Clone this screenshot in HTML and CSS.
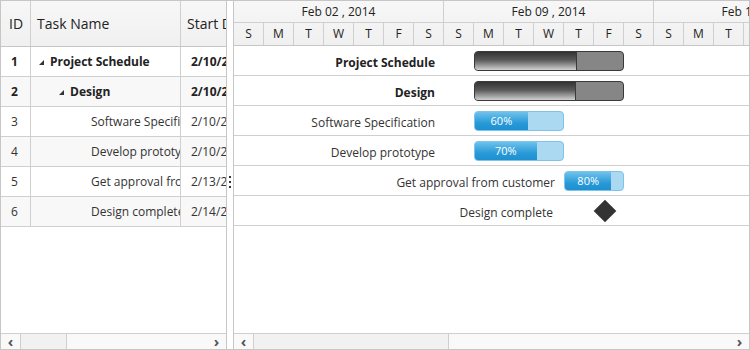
FILE: index.html
```html
<!DOCTYPE html>
<html lang="en">
<head>
    <meta charset="UTF-8">
    <title>Gantt</title>
    <link rel="stylesheet" href="styles.css">
</head>
<body>
    <div class="gantt">
        <!-- left grid -->
        <div class="grid-pane">
            <div class="grid-head">
                <div class="cell c-id">ID</div>
                <div class="cell c-name">Task Name</div>
                <div class="cell c-date">Start Date</div>
            </div>
            <div class="grid-body">
                <div class="grid-row bold">
                    <div class="cell c-id">1</div>
                    <div class="cell c-name lvl0"><span class="expander"></span>Project Schedule</div>
                    <div class="cell c-date">2/10/2014</div>
                </div>
                <div class="grid-row bold alt">
                    <div class="cell c-id">2</div>
                    <div class="cell c-name lvl1"><span class="expander"></span>Design</div>
                    <div class="cell c-date">2/10/2014</div>
                </div>
                <div class="grid-row">
                    <div class="cell c-id">3</div>
                    <div class="cell c-name lvl2">Software Specification</div>
                    <div class="cell c-date">2/10/2014</div>
                </div>
                <div class="grid-row alt">
                    <div class="cell c-id">4</div>
                    <div class="cell c-name lvl2">Develop prototype</div>
                    <div class="cell c-date">2/10/2014</div>
                </div>
                <div class="grid-row">
                    <div class="cell c-id">5</div>
                    <div class="cell c-name lvl2">Get approval from customer</div>
                    <div class="cell c-date">2/13/2014</div>
                </div>
                <div class="grid-row alt">
                    <div class="cell c-id">6</div>
                    <div class="cell c-name lvl2">Design complete</div>
                    <div class="cell c-date">2/14/2014</div>
                </div>
            </div>
            <div class="scrollbar">
                <div class="sb-btn">&#8249;</div>
                <div class="sb-thumb" style="width: 45px"></div>
                <div class="sb-track"></div>
                <div class="sb-btn">&#8250;</div>
            </div>
        </div>

        <div class="splitter">
            <div class="grip"><i></i><i></i><i></i></div>
        </div>

        <!-- chart -->
        <div class="chart-pane">
            <div class="chart-head">
                <div class="week-row">
                    <div class="week">Feb 02 , 2014</div>
                    <div class="week">Feb 09 , 2014</div>
                    <div class="week">Feb 16 , 2014</div>
                </div>
                <div class="day-row">
                    <div class="day">S</div><div class="day">M</div><div class="day">T</div><div class="day">W</div><div class="day">T</div><div class="day">F</div><div class="day">S</div>
                    <div class="day">S</div><div class="day">M</div><div class="day">T</div><div class="day">W</div><div class="day">T</div><div class="day">F</div><div class="day">S</div>
                    <div class="day">S</div><div class="day">M</div><div class="day">T</div><div class="day">W</div><div class="day">T</div><div class="day">F</div><div class="day">S</div>
                </div>
            </div>
            <div class="chart-body">
                <div class="chart-row">
                    <div class="task summary" style="left: 240px; width: 150px">
                        <span class="label bold parent">Project Schedule</span>
                        <div class="progress" style="width: 69%"></div>
                    </div>
                </div>
                <div class="chart-row">
                    <div class="task summary" style="left: 240px; width: 150px">
                        <span class="label bold parent">Design</span>
                        <div class="progress" style="width: 68%"></div>
                    </div>
                </div>
                <div class="chart-row">
                    <div class="task child" style="left: 240px; width: 90px">
                        <span class="label parent">Software Specification</span>
                        <div class="progress" style="width: 60%">60%</div>
                    </div>
                </div>
                <div class="chart-row">
                    <div class="task child" style="left: 240px; width: 90px">
                        <span class="label parent">Develop prototype</span>
                        <div class="progress" style="width: 70%">70%</div>
                    </div>
                </div>
                <div class="chart-row">
                    <div class="task child" style="left: 330px; width: 60px">
                        <span class="label">Get approval from customer</span>
                        <div class="progress" style="width: 80%">80%</div>
                    </div>
                </div>
                <div class="chart-row">
                    <div class="milestone" style="left: 371px">
                        <span class="label">Design complete</span>
                        <div class="diamond"></div>
                    </div>
                </div>
            </div>
            <div class="scrollbar">
                <div class="sb-btn">&#8249;</div>
                <div class="sb-thumb" style="width: 194px"></div>
                <div class="sb-track"></div>
                <div class="sb-btn">&#8250;</div>
            </div>
        </div>
    </div>
</body>
</html>
```

FILE: styles.css
```css
body {
    margin: 0;
    font-family: "Open Sans", "Noto Sans", sans-serif;
    color: #333;
    background: #fff;
}

.gantt {
    display: flex;
    width: 750px;
    height: 350px;
    box-sizing: border-box;
    border: 1px solid #c6c6c6;
    overflow: hidden;
}

/* ---------- left grid ---------- */
.grid-pane {
    width: 225px;
    flex: none;
    display: flex;
    flex-direction: column;
    border-right: 1px solid #c6c6c6;
    overflow: hidden;
}

.grid-head {
    display: flex;
    height: 45px;
    flex: none;
    background: linear-gradient(#f7f7f7, #f0f0f0);
    border-bottom: 1px solid #c6c6c6;
    font-size: 14px;
    color: #222;
}

.grid-body {
    flex: 1;
}

.grid-row {
    display: flex;
    height: 29px;
    border-bottom: 1px solid #cfcfcf;
    font-size: 12px;
}

.grid-row.alt {
    background: #f8f8f8;
}

.grid-row.bold {
    font-weight: bold;
    color: #222;
}

.cell {
    display: flex;
    align-items: center;
    white-space: nowrap;
    overflow: hidden;
    box-sizing: border-box;
    border-right: 1px solid #cfcfcf;
}

.c-id {
    width: 30px;
    padding-left: 8px;
    flex: none;
}

.grid-row .c-id {
    padding-left: 10px;
}

.c-name {
    width: 150px;
    padding-left: 6px;
    flex: none;
}

.c-date {
    flex: 1;
    padding-left: 6px;
    border-right: none;
}

.grid-row .c-date {
    padding-left: 10px;
}

.lvl0 { padding-left: 8px; }
.lvl1 { padding-left: 28px; }
.lvl2 { padding-left: 60px; }

.expander {
    width: 0;
    height: 0;
    border-left: 5px solid transparent;
    border-bottom: 5px solid #333;
    margin-right: 6px;
    margin-top: 1px;
}

/* ---------- splitter ---------- */
.splitter {
    width: 6px;
    flex: none;
    background: #fff;
    border-right: 1px solid #c6c6c6;
    position: relative;
}

.grip {
    position: absolute;
    top: 175px;
    left: 2px;
    display: flex;
    flex-direction: column;
    gap: 3px;
}

.grip i {
    width: 2px;
    height: 2px;
    background: #333;
}

/* ---------- chart ---------- */
.chart-pane {
    flex: 1;
    display: flex;
    flex-direction: column;
    overflow: hidden;
}

.chart-head {
    flex: none;
    background: linear-gradient(#f7f7f7, #f0f0f0);
    border-bottom: 1px solid #c6c6c6;
    color: #222;
    font-size: 12px;
}

.week-row,
.day-row {
    display: flex;
}

.week {
    width: 210px;
    flex: none;
    box-sizing: border-box;
    height: 22px;
    line-height: 22px;
    text-align: center;
    border-right: 1px solid #cfcfcf;
    border-bottom: 1px solid #cfcfcf;
}

.day {
    width: 30px;
    flex: none;
    box-sizing: border-box;
    height: 22px;
    line-height: 22px;
    text-align: center;
    border-right: 1px solid #cfcfcf;
}

.chart-body {
    flex: 1;
}

.chart-row {
    position: relative;
    height: 29px;
    border-bottom: 1px solid #cfcfcf;
    font-size: 12px;
}

.task {
    position: absolute;
    top: 5px;
    height: 20px;
    box-sizing: border-box;
    border-radius: 4px;
}

.label {
    position: absolute;
    right: 100%;
    margin-right: 10px;
    top: 2px;
    white-space: nowrap;
    color: #333;
}

.label.parent {
    margin-right: 40px;
}

.label.bold {
    font-weight: bold;
    color: #222;
}

.summary {
    background: #868686;
    border: 1px solid #3a3a3a;
}

.summary .progress {
    height: 100%;
    background: linear-gradient(#333, #5a5a5a 45%, #d0d0d0);
    border-right: 1px solid #3a3a3a;
    border-radius: 3px 0 0 3px;
    box-sizing: border-box;
}

.child {
    background: #aad9f1;
    border: 1px solid #7ec4ea;
}

.child .progress {
    height: 100%;
    background: linear-gradient(#6ec2ec, #2a9ad7 60%, #1c90d1);
    border-radius: 3px 0 0 3px;
    color: #fff;
    font-size: 11px;
    line-height: 18px;
    text-align: center;
}

.milestone {
    position: absolute;
    top: 5px;
    height: 20px;
}

.milestone .label {
    margin-right: 52px;
    top: 3px;
}

.diamond {
    position: absolute;
    top: 2px;
    left: -8px;
    width: 16px;
    height: 16px;
    background: #333;
    transform: rotate(45deg);
}

/* ---------- scrollbar ---------- */
.scrollbar {
    flex: none;
    display: flex;
    height: 15px;
    border-top: 1px solid #cfcfcf;
    background: #f9f9f9;
    color: #555;
    font-size: 15px;
    line-height: 14px;
}

.sb-btn {
    width: 19px;
    flex: none;
    text-align: center;
    font-weight: bold;
}

.sb-thumb {
    flex: none;
    background: #f1f1f1;
    border-left: 1px solid #cfcfcf;
    border-right: 1px solid #cfcfcf;
}

.sb-track {
    flex: 1;
}
```
